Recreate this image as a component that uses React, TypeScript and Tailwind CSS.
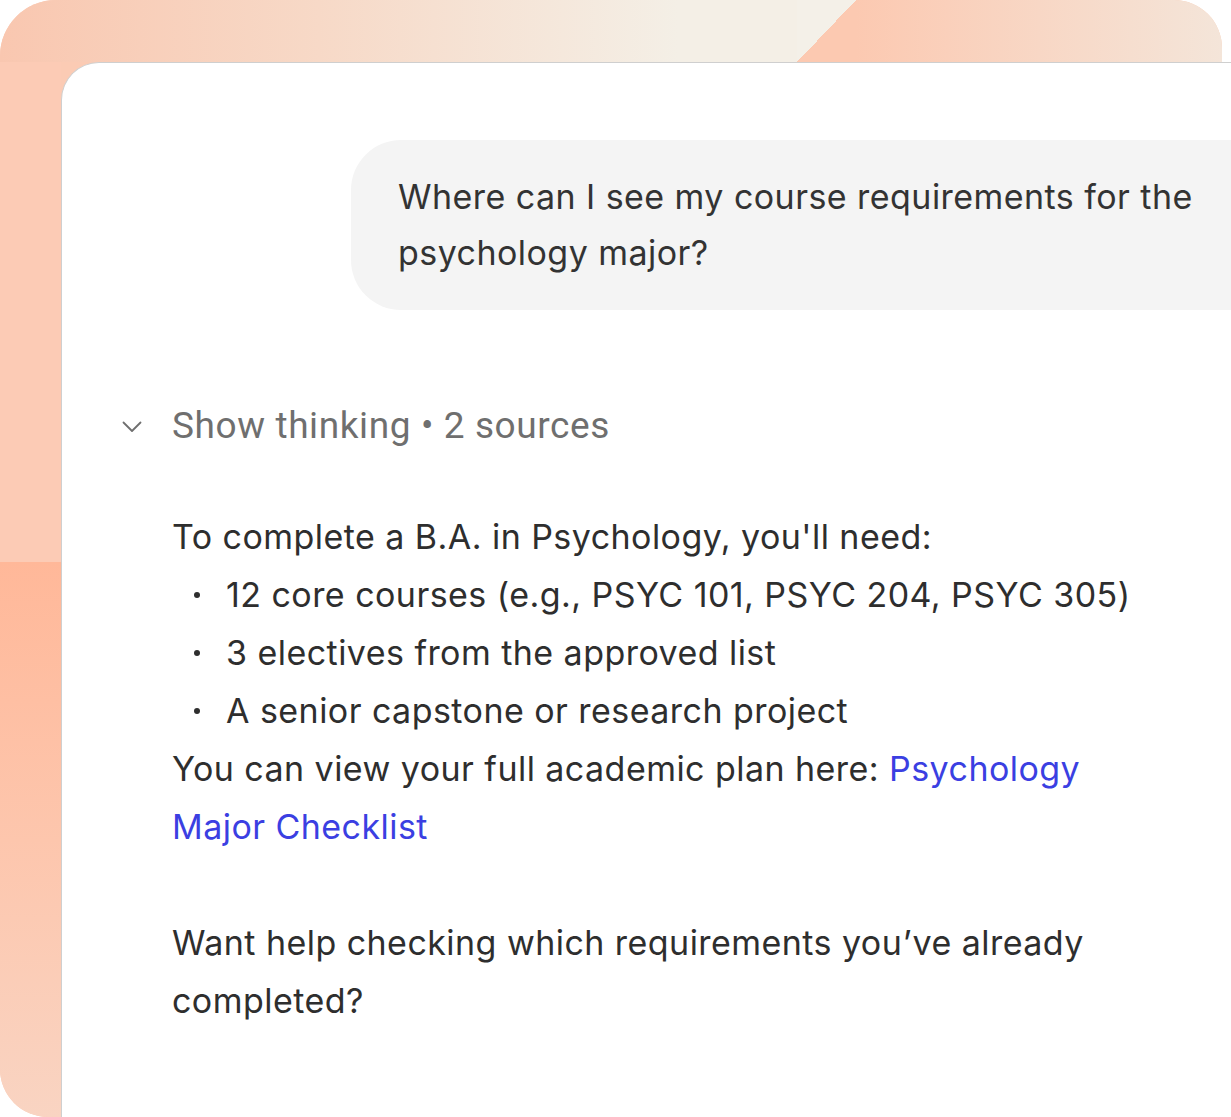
export default function App() {
  return (
    <div className="w-[1231px] h-[1117px] bg-white overflow-hidden">
      <div className="flex flex-col w-[1222px] h-full rounded-tl-[56px] rounded-tr-[48px] rounded-bl-[48px] bg-[#fbcbb4]">
        {/* top strip */}
        <div className="flex h-[62px] shrink-0">
          <div className="w-[797px] rounded-tl-[56px] bg-[linear-gradient(to_right,#f9c7b0,#f7d9c7_40%,#f4efe6_85%)]" />
          <div className="w-[59px] bg-[linear-gradient(to_bottom_right,#f4f0e8_50%,#fcc9b1_50%)]" />
          <div className="flex-1 rounded-tr-[48px] bg-[linear-gradient(to_right,#fcc9b1,#f4e5d9)]" />
        </div>

        <div className="flex flex-1 min-h-0">
          {/* left strip */}
          <div className="w-[61px] shrink-0 flex flex-col">
            <div className="h-[500px] bg-[#fccbb5]" />
            <div className="flex-1 rounded-bl-[48px] bg-[linear-gradient(to_bottom,#ffb899,#fdc6ad_50%,#f9d4c2)]" />
          </div>

          {/* chat card */}
          <div className="w-[1170px] shrink-0 bg-white border-l border-t border-[#cfcfcf] rounded-tl-[38px] overflow-hidden pt-[77px] font-['Inter',sans-serif]">
            <div className="ml-[289px] rounded-l-[50px] bg-[#f4f4f4] pl-[47px] pr-[30px] pt-[29px] pb-[29px]">
              <p className="text-[34px] leading-[56px] text-[#333333] tracking-[0.45px]">
                Where can I see my course requirements for the psychology major?
              </p>
            </div>

            <div className="flex items-center ml-[58px] mt-[92px] h-[48px]">
              <svg width="24" height="24" viewBox="0 0 24 24" fill="none" className="mr-[28px] mt-[2px]">
                <path d="M3.5 7.5 L12 16 L20.5 7.5" stroke="#6f6f6f" strokeWidth="1.8" strokeLinecap="round" strokeLinejoin="round" />
              </svg>
              <span className="font-['Roboto',sans-serif] text-[37px] tracking-[0.6px] text-[#6f6f6f]">
                Show thinking • 2 sources
              </span>
            </div>

            <div className="ml-[110px] mt-[58px] w-[990px] text-[34px] leading-[58px] tracking-[0.45px] text-[#2e2e2e]">
              <p>To complete a B.A. in Psychology, you'll need:</p>
              <ul>
                <li className="flex items-center">
                  <span className="w-[54px] flex pl-[22px]">
                    <span className="w-[6px] h-[6px] rounded-full bg-[#2e2e2e]" />
                  </span>
                  <span>12 core courses (e.g., PSYC 101, PSYC 204, PSYC 305)</span>
                </li>
                <li className="flex items-center">
                  <span className="w-[54px] flex pl-[22px]">
                    <span className="w-[6px] h-[6px] rounded-full bg-[#2e2e2e]" />
                  </span>
                  <span>3 electives from the approved list</span>
                </li>
                <li className="flex items-center">
                  <span className="w-[54px] flex pl-[22px]">
                    <span className="w-[6px] h-[6px] rounded-full bg-[#2e2e2e]" />
                  </span>
                  <span>A senior capstone or research project</span>
                </li>
              </ul>
              <p>
                You can view your full academic plan here:{" "}
                <a className="text-[#3b3fe2]">Psychology Major Checklist</a>
              </p>
              <p className="mt-[58px]">
                Want help checking which requirements you’ve already completed?
              </p>
            </div>
          </div>
        </div>
      </div>
    </div>
  );
}
